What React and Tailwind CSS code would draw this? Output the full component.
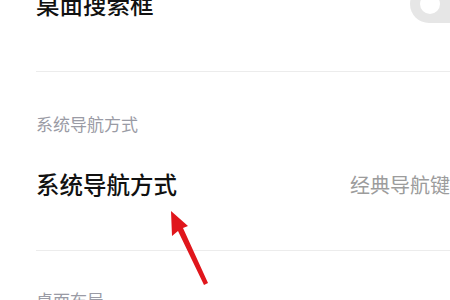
import React from 'react';

const Arrow = () => (
    <svg className="absolute left-0 top-0" width="450" height="300" viewBox="0 0 450 300">
        <polygon points="171,211 188,226 183,228 208,283 204,285 178,231 172,236" fill="#e0161c" />
    </svg>
);

export default function App() {
    return (
        <div className="relative w-[450px] h-[300px] overflow-hidden bg-white" style={{ fontFamily: '"Noto Sans CJK SC", "Noto Sans", sans-serif' }}>
            <div className="-mt-[36px] pl-[36px]">
                {/* 桌面搜索框 row */}
                <div className="h-[80px] flex items-center justify-between">
                    <span className="text-[23.5px] leading-8 font-medium text-[#111]">桌面搜索框</span>
                    <div className="-mr-[30px] w-[70px] h-[38px] rounded-full bg-[#e6e6e6] flex items-center pl-[10px]">
                        <div className="w-[20px] h-[20px] rounded-full bg-white"></div>
                    </div>
                </div>
                <div className="h-[27px]"></div>
                <div className="border-t border-[#ececec]"></div>

                {/* section header */}
                <div className="pt-[40px] h-[24px] box-content leading-6 text-[17px] text-[#9a9ba5]">系统导航方式</div>

                {/* nav mode row */}
                <div className="mt-[19px] h-[60px] flex items-center justify-between">
                    <span className="text-[23.5px] font-medium text-[#111]">系统导航方式</span>
                    <span className="text-[20px] text-[#9c9c9c]">经典导航键</span>
                </div>
                <div className="h-[35px]"></div>
                <div className="border-t border-[#ececec]"></div>

                <div className="pt-[37px] leading-6 text-[17px] text-[#9a9ba5]">桌面布局</div>
            </div>
            <Arrow />
        </div>
    );
}
